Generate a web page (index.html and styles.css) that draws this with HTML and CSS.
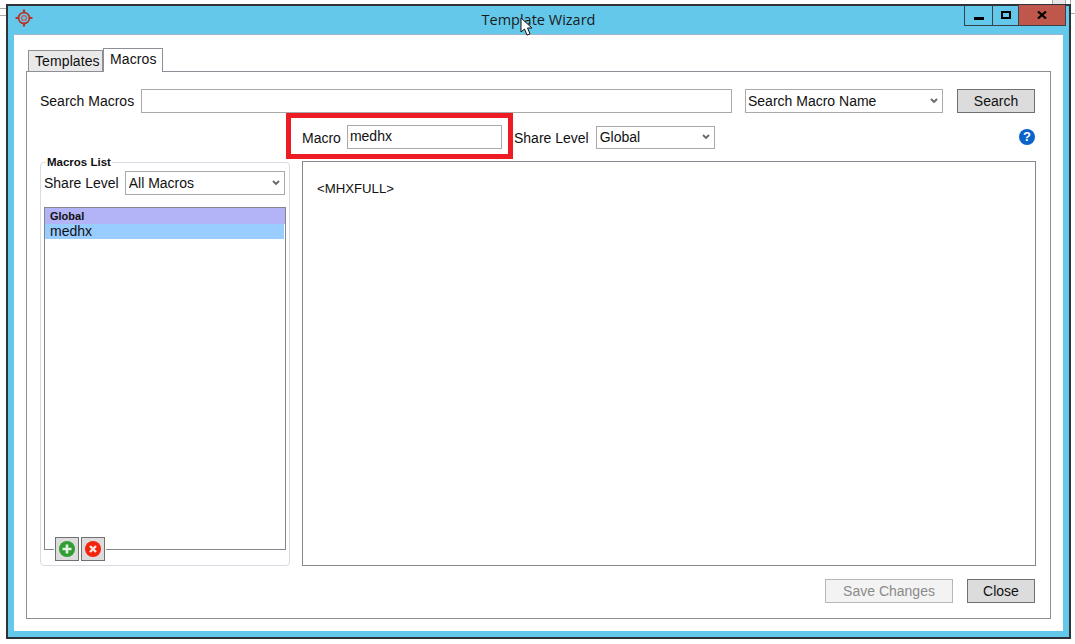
FILE: index.html
```html
<!DOCTYPE html>
<html lang="en">
<head>
  <meta charset="UTF-8">
  <title>Template Wizard</title>
  <link rel="stylesheet" href="styles.css">
</head>
<body>
  <!-- Bits of the window behind -->
  <div class="behind behind-left"></div>
  <div class="behind behind-top"></div>
  <div class="behind behind-right"></div>

  <div class="window">
    <div class="titlebar">
      <svg class="app-icon" width="18" height="18" viewBox="0 0 18 18">
        <circle cx="9" cy="9" r="5.5" fill="none" stroke="#b8322a" stroke-width="1.6"/>
        <circle cx="9" cy="9" r="2.4" fill="none" stroke="#c9544c" stroke-width="1.2"/>
        <path d="M9 0.5v4M9 13.5v4M0.5 9h4M13.5 9h4" stroke="#b8322a" stroke-width="2.2"/>
      </svg>
      <div class="title">Template Wizard</div>
      <div class="controls">
        <div class="ctl ctl-min">
          <svg width="10" height="3" viewBox="0 0 10 3"><rect width="10" height="3" fill="#000"/></svg>
        </div>
        <div class="ctl ctl-max">
          <svg width="10" height="8" viewBox="0 0 10 8"><rect x="1" y="1" width="8" height="6" fill="none" stroke="#000" stroke-width="2"/></svg>
        </div>
        <div class="ctl ctl-close">
          <svg width="10" height="8" viewBox="0 0 10 8"><path d="M1 0.5l8 7M9 0.5l-8 7" stroke="#000" stroke-width="2.2"/></svg>
        </div>
      </div>
    </div>

    <div class="content">
      <div class="tabs">
        <div class="tab">Templates</div>
        <div class="tab tab-active">Macros</div>
      </div>

      <div class="panel">
        <div class="search-row">
          <label class="lbl">Search Macros</label>
          <input class="field search-input" type="text">
          <select class="field pick search-type"><option>Search Macro Name</option></select>
          <button class="btn search-btn">Search</button>
        </div>

        <div class="macro-row">
          <div class="highlight">
            <label class="lbl">Macro</label>
            <input class="field macro-input" type="text" value="medhx">
          </div>
          <label class="lbl share-lbl">Share Level</label>
          <select class="field pick share-select"><option>Global</option></select>
          <span class="help">?</span>
        </div>

        <div class="main-row">
          <fieldset class="macros-list">
            <legend>Macros List</legend>
            <div class="share-row">
              <label class="lbl">Share Level</label>
              <select class="field pick all-select"><option>All Macros</option></select>
            </div>
            <div class="list-box">
              <div class="group-row">Global</div>
              <div class="item-row">medhx</div>
              <div class="list-tools">
                <button class="tool">
                  <svg width="16" height="16" viewBox="0 0 16 16"><circle cx="8" cy="8" r="8" fill="#2f9e33"/><path d="M8 3.5v9M3.5 8h9" stroke="#e6f2e6" stroke-width="2.6"/></svg>
                </button>
                <button class="tool">
                  <svg width="16" height="16" viewBox="0 0 16 16"><circle cx="8" cy="8" r="8" fill="#f5230a"/><path d="M5 5l6 6M11 5l-6 6" stroke="#f6e6e2" stroke-width="2.4"/></svg>
                </button>
              </div>
            </div>
          </fieldset>
          <textarea class="editor">&lt;MHXFULL&gt;</textarea>
        </div>

        <div class="footer-row">
          <button class="btn save-btn" disabled>Save Changes</button>
          <button class="btn close-btn">Close</button>
        </div>
      </div>
    </div>
  </div>

  <!-- Mouse pointer from the screen capture -->
  <svg class="pointer" width="15" height="20" viewBox="0 0 15 20">
    <path d="M1 1v14l3.5-3 2.5 6 3-1.2-2.5-5.8h4.5z" fill="#fff" stroke="#111" stroke-width="1"/>
  </svg>
</body>
</html>
```

FILE: styles.css
```css
/* Basic layout */
html, body {
  margin: 0;
  padding: 0;
  width: 1075px;
  height: 644px;
  overflow: hidden;
  background: #fff;
  font-family: "Liberation Sans", Arial, sans-serif;
  font-size: 14px;
  color: #111;
}

/* Window behind */
.behind {
  position: absolute;
  box-sizing: border-box;
}
.behind-left {
  left: 0;
  top: 8px;
  width: 6px;
  height: 8px;
  border-top: 1px solid #aaa;
  border-bottom: 1px solid #aaa;
}
.behind-top {
  left: 1052px;
  top: 0;
  width: 14px;
  height: 5px;
  background: #e6e6e6;
  border: 1px solid #aaa;
  border-top: none;
}
.behind-right {
  left: 1070px;
  top: 0;
  width: 5px;
  height: 14px;
  border-left: 1px solid #aaa;
  border-bottom: 1px solid #aaa;
}

/* Window */
.window {
  position: absolute;
  left: 6px;
  top: 4px;
  width: 1065px;
  height: 635px;
  box-sizing: border-box;
  border: 2px solid #2e3338;
  background: #63c8e9;
  display: flex;
  flex-direction: column;
  padding: 0 6px 6px 6px;
}
.titlebar {
  height: 29px;
  margin: 0 -6px;
  display: grid;
  grid-template-columns: 1fr auto 1fr;
  align-items: start;
  flex-shrink: 0;
}
.app-icon {
  margin: 3px 0 0 7px;
}
.title {
  margin-top: 5px;
  font-family: "Open Sans", sans-serif;
  font-size: 14.5px;
  line-height: 18px;
  color: #1b1b1b;
}
.controls {
  justify-self: end;
  display: flex;
  height: 21px;
  margin-top: -1px;
  margin-right: 3px;
  box-sizing: border-box;
  border: 1px solid #3a4148;
  border-width: 0 1px 1px 1px;
}
.ctl {
  display: flex;
  align-items: center;
  justify-content: center;
  height: 20px;
  box-sizing: border-box;
}
.ctl-min {
  width: 28px;
  border-right: 1px solid #3a4148;
  padding-top: 6px;
}
.ctl-max {
  width: 26px;
  border-right: 1px solid #3a4148;
}
.ctl-close {
  width: 46px;
  background: #c0574c;
}

/* White content area */
.content {
  flex: 1;
  display: flex;
  flex-direction: column;
  background: #fff;
  box-shadow: 0 -1px 0 #9fb4c8;
  padding: 13px 12px 12px 12px;
  min-height: 0;
}

/* Tabs */
.tabs {
  display: flex;
  align-items: flex-end;
  padding-left: 2px;
  height: 24px;
  margin-bottom: -1px;
  position: relative;
  z-index: 1;
}
.tab {
  box-sizing: border-box;
  height: 21px;
  line-height: 20px;
  padding: 0 0 0 6px;
  width: 75px;
  background: #e9e9e9;
  border: 1px solid #8e8e96;
  border-bottom: none;
  margin-bottom: 1px;
  letter-spacing: 0.1px;
}
.tab-active {
  width: 60px;
  height: 24px;
  line-height: 21px;
  background: #fff;
  margin-bottom: 0;
}

/* Panel */
.panel {
  flex: 1;
  display: flex;
  flex-direction: column;
  border: 1px solid #8e8e96;
  padding: 17px 15px 14px 13px;
  min-height: 0;
}

/* Form controls */
.field {
  box-sizing: border-box;
  height: 24px;
  border: 1px solid #a9a9a9;
  border-radius: 0;
  background: #fff;
  font-family: "Liberation Sans", Arial, sans-serif;
  font-size: 14px;
  color: #111;
  padding: 0 2px;
  margin: 0;
  outline: none;
}
.pick {
  appearance: none;
  background: #fff url("data:image/svg+xml,%3Csvg xmlns='http://www.w3.org/2000/svg' width='8' height='6' viewBox='0 0 8 6'%3E%3Cpath d='M1 1l3 3 3-3' fill='none' stroke='%23666' stroke-width='1.8'/%3E%3C/svg%3E") no-repeat right 4px center;
}
.btn {
  box-sizing: border-box;
  height: 24px;
  border: 1px solid #707070;
  border-radius: 0;
  background: #dcdcdc;
  font-family: "Liberation Sans", Arial, sans-serif;
  font-size: 14px;
  color: #111;
  padding: 0;
  margin: 0;
}

.search-row {
  display: flex;
  align-items: center;
  height: 24px;
}
.search-input {
  flex: 1;
  margin-left: 7px;
}
.search-type {
  width: 198px;
  margin-left: 13px;
}
.search-btn {
  width: 78px;
  margin-left: 14px;
}

.macro-row {
  display: flex;
  align-items: center;
  height: 46px;
  margin-left: 246px;
}
.highlight {
  box-sizing: border-box;
  display: flex;
  align-items: center;
  width: 227px;
  height: 46px;
  border: 5px solid #ed1c24;
  padding: 3px 0 0 11px;
}
.macro-input {
  width: 155px;
  margin-left: 6px;
  margin-top: -1px;
  padding-bottom: 2px;
}
.share-lbl {
  margin-left: 1px;
  position: relative;
  top: 2px;
}
.share-select {
  width: 119px;
  margin-left: 7px;
  height: 23px;
  padding-left: 3px;
  position: relative;
  top: 1px;
}
.help {
  margin-left: auto;
  width: 16px;
  height: 16px;
  border-radius: 50%;
  background: #0a63c9;
  color: #fff;
  font-weight: bold;
  font-size: 13px;
  line-height: 16px;
  text-align: center;
  position: relative;
  top: 1px;
}

.main-row {
  display: flex;
  gap: 12px;
  height: 405px;
  margin-top: 2px;
}
.macros-list {
  box-sizing: border-box;
  width: 250px;
  height: 411px;
  margin: -6px 0 0 0;
  padding: 2px 3px 15px 3px;
  border: 1px solid #d5dce4;
  border-radius: 4px;
  display: flex;
  flex-direction: column;
}
.macros-list legend {
  font-size: 11.5px;
  font-weight: bold;
  line-height: 14px;
  padding: 0 1px;
  margin-left: 2px;
}
.share-row {
  display: flex;
  align-items: center;
  height: 24px;
}
.all-select {
  width: 160px;
  margin-left: 6px;
  padding-left: 3px;
}
.list-box {
  position: relative;
  flex: 1;
  margin-top: 12px;
  border: 1px solid #85858d;
}
.group-row {
  height: 16px;
  line-height: 16px;
  padding-left: 5px;
  background: #b3b3f7;
  font-size: 11px;
  font-weight: bold;
}
.item-row {
  height: 15px;
  line-height: 15px;
  padding-left: 5px;
  margin-right: 1px;
  background: #99ccff;
}
.list-tools {
  position: absolute;
  left: 9px;
  bottom: -12px;
  display: flex;
  gap: 2px;
  padding: 0 1px;
  background: #fff;
}
.tool {
  box-sizing: border-box;
  width: 24px;
  height: 24px;
  display: flex;
  align-items: center;
  justify-content: center;
  padding: 0;
  border: 1px solid #707070;
  background: #dcdcdc;
}

.editor {
  box-sizing: border-box;
  width: 734px;
  height: 405px;
  margin: 0 -1px 0 0;
  padding: 19px 14px;
  border: 1px solid #85858d;
  border-radius: 0;
  resize: none;
  outline: none;
  overflow: hidden;
  font-family: "Liberation Sans", Arial, sans-serif;
  font-size: 13.2px;
  color: #111;
}

.footer-row {
  display: flex;
  justify-content: flex-end;
  gap: 14px;
  margin-top: 13px;
}
.save-btn {
  width: 128px;
  background: #f3f3f3;
  border-color: #b8b8b8;
  color: #8a8a8a;
}
.close-btn {
  width: 68px;
}

.pointer {
  position: absolute;
  left: 520px;
  top: 17px;
}
```
